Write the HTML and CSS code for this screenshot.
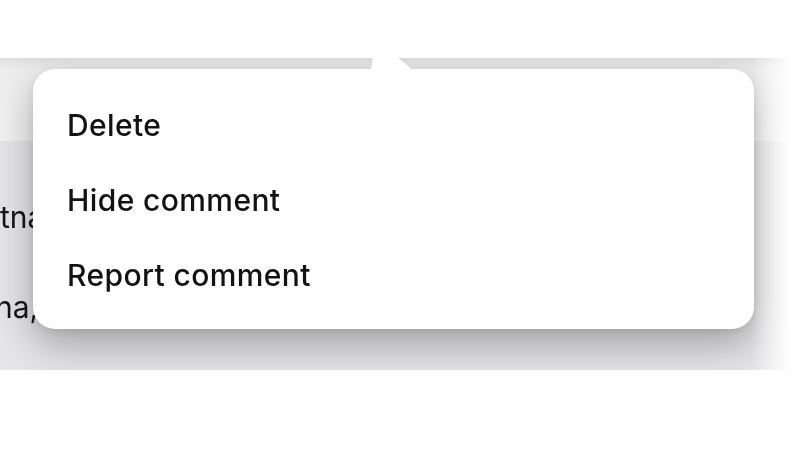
FILE: index.html
```html
<!DOCTYPE html>
<html lang="en">
<head>
<meta charset="utf-8">
<link rel="stylesheet" href="styles.css">
</head>
<body>
<div class="stage">
  <div class="panel">
    <div class="header"></div>
    <div class="content">
      <p class="line line-one">tna Dewi</p>
      <p class="line line-two">na, jadi saya pikir (kita) harus pergi ke sana juga, ya</p>
    </div>
    <div class="popover">
      <svg class="arrow" width="44" height="14" viewBox="0 0 44 14"><polygon points="2,0 25,0 42,14 0,14" fill="#fff"/></svg>
      <ul class="menu">
        <li class="item">Delete</li>
        <li class="item">Hide comment</li>
        <li class="item">Report comment</li>
      </ul>
    </div>
  </div>
</div>
</body>
</html>
```

FILE: styles.css
```css
html, body {
  margin: 0;
  padding: 0;
  background: #ffffff;
}
body {
  width: 800px;
  height: 450px;
  overflow: hidden;
  font-family: "Inter", "Liberation Sans", sans-serif;
  color: #111113;
}
.stage {
  padding-top: 58px;
}
.panel {
  position: relative;
  width: 795px;
  height: 312px;
  background: #e6e6e8;
  -webkit-mask-image: linear-gradient(to right, #000 0, #000 752px, transparent 792px);
  mask-image: linear-gradient(to right, #000 0, #000 752px, transparent 792px);
}
.header {
  height: 83px;
  background: linear-gradient(to bottom, #dedee0 0, #eeeeef 12px, #f2f2f3 100%);
}
.content {
  padding-top: 60px;
}
.line {
  margin: 0;
  font-size: 30px;
  line-height: 32px;
  white-space: nowrap;
  color: #161618;
}
.line-one {
  padding-left: 0;
}
.line-two {
  margin-top: 58px;
  margin-left: -5px;
}
.popover {
  position: absolute;
  left: 33px;
  top: 11px;
  width: 721px;
  height: 260px;
  background: #ffffff;
  border-radius: 22px;
  box-shadow: 0 16px 40px rgba(0, 0, 0, 0.3), 0 2px 8px rgba(0, 0, 0, 0.08);
}
.arrow {
  position: absolute;
  left: 338px;
  top: -13px;
  display: block;
}
.menu {
  list-style: none;
  margin: 0;
  padding: 18px 0 17px 34px;
}
.item {
  height: 75px;
  display: flex;
  align-items: center;
  font-size: 30px;
  font-weight: 500;
  letter-spacing: 0.4px;
  color: #121214;
}
```
